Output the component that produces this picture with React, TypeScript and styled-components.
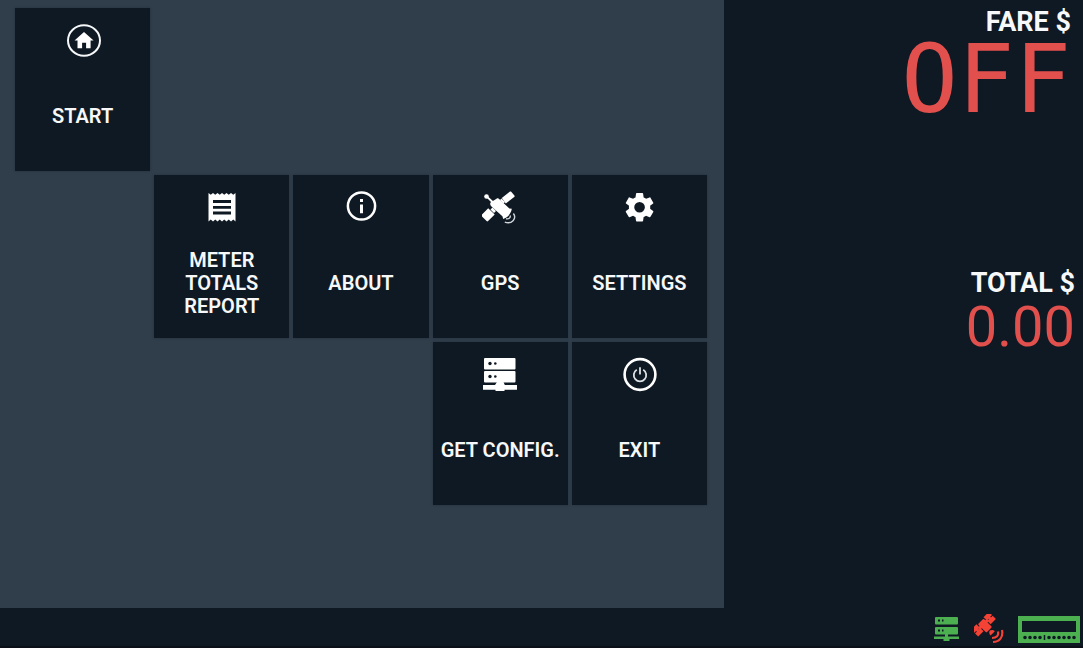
import React from "react";
import styled, { createGlobalStyle } from "styled-components";

const GlobalStyle = createGlobalStyle`
  *, *::before, *::after { box-sizing: border-box; }
  body {
    margin: 0;
    background: #0f1923;
    color: #f6f8f9;
    font-family: Roboto, "Liberation Sans", sans-serif;
  }
`;

const Page = styled.div`
  display: flex;
  flex-direction: column;
  min-height: 100vh;
  background: #0f1923;
`;

const Main = styled.main`
  flex: 1;
  display: grid;
  grid-template-columns: minmax(0, 2fr) minmax(0, 1fr);
`;

const MenuPanel = styled.nav`
  padding: 8px 17px 16px 15px;
  background: #303d4b;
  margin-right: -2px;
`;

const TileGrid = styled.div`
  display: grid;
  grid-template-columns: repeat(5, minmax(0, 1fr));
  grid-auto-rows: minmax(163px, auto);
  gap: 4px;
`;

const Tile = styled.button<{ $column: number; $row: number }>`
  grid-column: ${(p) => p.$column};
  grid-row: ${(p) => p.$row};
  display: flex;
  flex-direction: column;
  align-items: center;
  padding: 14px 0 0;
  border: 0;
  background: #0f1923;
  box-shadow: 0 0 2px #25313d;
  color: inherit;
  font: inherit;
  cursor: pointer;
`;

const TileIcon = styled.svg`
  flex: none;
  width: 36px;
  height: 36px;
`;

const TileLabel = styled.span<{ $narrow?: boolean }>`
  flex: 1;
  display: flex;
  align-items: center;
  max-width: ${(p) => (p.$narrow ? "96px" : "none")};
  padding-top: 4px;
  font-size: 20px;
  font-weight: 600;
  line-height: 23px;
  text-align: center;
`;

const Meter = styled.aside`
  display: grid;
  grid-template-rows: 261px auto;
  align-content: start;
  padding-top: 6px;
`;

const Reading = styled.section<{ $inset: number }>`
  display: flex;
  flex-direction: column;
  align-items: flex-end;
  padding-right: ${(p) => p.$inset}px;
`;

const ReadingLabel = styled.h2`
  margin: 0;
  font-size: 27px;
  font-weight: 700;
  line-height: 32px;
`;

const ReadingValue = styled.output<{ $large?: boolean }>`
  color: #e2504e;
  font-family: ${(p) => (p.$large ? '"DejaVu Sans Mono", monospace' : "Roboto, sans-serif")};
  font-size: ${(p) => (p.$large ? "94px" : "56px")};
  line-height: ${(p) => (p.$large ? "84px" : "56px")};
`;

const StatusBar = styled.footer`
  display: flex;
  justify-content: flex-end;
  align-items: center;
  gap: 14px;
  height: 40px;
  padding: 4px 3px 0 0;
  border-bottom: 2px solid #0a0f18;
`;

const StatusIcon = styled.svg<{ $width: number }>`
  width: ${(p) => p.$width}px;
  height: 30px;
`;

const HomeIcon = () => (
  <TileIcon viewBox="0 0 36 36" aria-hidden="true">
    <ellipse cx="19" cy="18.5" rx="16" ry="15.3" fill="none" stroke="#f5f7f8" strokeWidth="2" />
    <path d="M19 10 9.5 18.500h3v7.700h4.600v-5.500h4v5.500h4.500v-7.700h3z" fill="#fff" />
  </TileIcon>
);

const ReportIcon = () => (
  <TileIcon viewBox="0 0 36 36" aria-hidden="true">
    <path
      d="M4.500 4l2.250 1.800L9 4l2.250 1.800L13.500 4l2.250 1.800L18 4l2.250 1.800L22.500 4l2.250 1.800L27 4l2.250 1.800L31.500 4v28.500l-2.250-2L27 32.500l-2.250-2-2.250 2-2.250-2-2.250 2-2.250-2-2.250 2-2.250-2-2.250 2-2.250-2-2.250 2z"
      fill="#fff"
    />
    <path d="M9 12.500h18M9 18.300h18M9 24h18" stroke="#0f1923" strokeWidth="2.800" />
  </TileIcon>
);

const InfoIcon = () => (
  <TileIcon viewBox="0 0 36 36" aria-hidden="true">
    <circle cx="18.500" cy="17" r="13.600" fill="none" stroke="#fff" strokeWidth="2.500" />
    <path d="M17 10h3v2.900h-3zM17 15.600h3v8.600h-3z" fill="#fff" />
  </TileIcon>
);

const SatelliteIcon = () => (
  <TileIcon viewBox="0 0 36 36" aria-hidden="true">
    <g fill="#fff">
      <circle cx="4.500" cy="7.500" r="2.300" />
      <path d="M5.500 7l6.500 6-1.500 1.500L4.500 8.500z" />
      <path d="M8.500 13.500l6-3.800c1-.6 2-.4 2.900.5l10 9.300 2.400.3c-.8 5-3.900 8.600-8.600 10.200l-.8-2.800-10.900-9.600c-1.400-1.300-1.600-2.600-1-4.100z" />
      <path d="M19.800 9l7.900-6.300c.5-.4 1-.4 1.500.1l3.200 3.800c.4.500.3 1-.2 1.400l-8.400 6.400z" />
      <path d="M6.200 19.200l6.500 6.200-6.600 6.700c-.5.500-1 .5-1.500 0L-.300 27.200c-.5-.5-.5-1 0-1.500z" />
      <path d="M10.500 18.500l3.500 3.500-2 2-3.500-3.500zM19.500 9.500l3.500 3.500-1.500 1.500-3.500-3.500z" />
    </g>
    <path
      d="M28.200 26.500c.5 2.500-1.500 3.800-4.200 3.200M31.400 24.500c3.600 5-1.600 11.200-8.600 8.600"
      fill="none"
      stroke="#cfd5da"
      strokeWidth="1.400"
    />
  </TileIcon>
);

const GearIcon = () => (
  <TileIcon viewBox="0 0 36 36" aria-hidden="true">
    <g transform="translate(.8 .5) scale(1.480)">
      <path
        fill="#fff"
        d="M19.140 12.940c.04-.3.060-.61.060-.94 0-.32-.02-.64-.07-.94l2.030-1.580c.18-.14.230-.41.120-.61l-1.920-3.320c-.12-.22-.37-.29-.59-.22l-2.390.96c-.5-.38-1.030-.7-1.620-.94l-.36-2.540c-.04-.24-.24-.41-.48-.41h-3.840c-.24 0-.43.170-.47.410l-.36 2.540c-.59.240-1.130.570-1.620.940l-2.390-.96c-.22-.08-.47 0-.59.220L2.740 8.870c-.12.210-.08.470.120.610l2.030 1.580c-.05.300-.09.630-.09.940s.02.640.070.940l-2.030 1.580c-.18.140-.23.410-.12.610l1.920 3.320c.12.220.370.290.590.220l2.390-.96c.5.380 1.030.700 1.620.940l.36 2.540c.05.240.240.410.480.410h3.840c.24 0 .44-.17.470-.41l.36-2.540c.59-.24 1.130-.56 1.620-.94l2.390.96c.22.080.470 0 .59-.22l1.920-3.320c.12-.22.070-.47-.12-.61l-2.010-1.580zM12 15.600a3.600 3.600 0 1 1 0-7.200 3.600 3.600 0 0 1 0 7.200z"
      />
    </g>
  </TileIcon>
);

const ServerIcon = () => (
  <TileIcon viewBox="0 0 36 36" aria-hidden="true">
    <g fill="#fff">
      <rect x="2" y="2" width="31.500" height="11.500" rx="1" />
      <rect x="2" y="15" width="31.500" height="11.500" rx="1" />
      <path d="M15 26h6.500l1.300 3H35v4.700H22.500V35h-9v-1.300H1V29h12z" />
    </g>
    <g fill="#0f1923">
      <circle cx="8" cy="7.500" r="1.700" />
      <circle cx="13.300" cy="7.500" r="1.300" />
      <circle cx="8" cy="20.500" r="1.700" />
      <circle cx="13.300" cy="20.500" r="1.300" />
    </g>
  </TileIcon>
);

const PowerIcon = () => (
  <TileIcon viewBox="0 0 36 36" aria-hidden="true">
    <circle cx="19" cy="18.500" r="15.400" fill="none" stroke="#fff" strokeWidth="2.600" />
    <path
      d="M15.800 13.800a6.200 6.200 0 1 0 6.400 0M19 11.300v7.200"
      fill="none"
      stroke="#dce2e6"
      strokeWidth="1.800"
    />
  </TileIcon>
);

const tiles = [
  { label: "START", column: 1, row: 1, Icon: HomeIcon },
  { label: "METER TOTALS REPORT", column: 2, row: 2, Icon: ReportIcon, narrow: true },
  { label: "ABOUT", column: 3, row: 2, Icon: InfoIcon },
  { label: "GPS", column: 4, row: 2, Icon: SatelliteIcon },
  { label: "SETTINGS", column: 5, row: 2, Icon: GearIcon },
  { label: "GET CONFIG.", column: 4, row: 3, Icon: ServerIcon },
  { label: "EXIT", column: 5, row: 3, Icon: PowerIcon },
];

export default function App() {
  return (
    <Page>
      <GlobalStyle />
      <Main>
        <MenuPanel aria-label="Main menu">
          <TileGrid>
            {tiles.map(({ label, column, row, Icon, narrow }) => (
              <Tile key={label} type="button" $column={column} $row={row}>
                <Icon />
                <TileLabel $narrow={narrow}>{label}</TileLabel>
              </Tile>
            ))}
          </TileGrid>
        </MenuPanel>
        <Meter>
          <Reading $inset={12}>
            <ReadingLabel>FARE $</ReadingLabel>
            <ReadingValue $large>OFF</ReadingValue>
          </Reading>
          <Reading $inset={8}>
            <ReadingLabel>TOTAL $</ReadingLabel>
            <ReadingValue>0.00</ReadingValue>
          </Reading>
        </Meter>
      </Main>
      <StatusBar>
        <StatusIcon $width={26} viewBox="0 0 26 30" role="img" aria-label="Server connected">
          <g fill="#4caf50">
            <rect x="1" y="3" width="23" height="7.500" rx="1" />
            <rect x="1" y="13" width="23" height="7.500" rx="1" />
            <path d="M11 20h3v2.500h11v2.500H15.500v2h-6v-2H0v-2.500h11z" />
          </g>
          <path d="M4 6.500h2M8 6.500h1.500M4 16.500h2M8 16.500h1.500" stroke="#0f1923" strokeWidth="2" />
        </StatusIcon>
        <StatusIcon $width={30} viewBox="0 0 30 30" role="img" aria-label="No satellite signal">
          <g fill="#f44336">
            <g transform="rotate(45 12 12)">
              <rect x="5" y="8.500" width="12" height="8" rx="1" />
              <rect x="4" y="0" width="4.500" height="7.500" />
              <rect x="9.500" y="0" width="4.500" height="7.500" />
              <rect x="4" y="17.500" width="4.500" height="7.500" />
              <rect x="9.500" y="17.500" width="4.500" height="7.500" />
              <rect x="5" y="2.500" width="8" height="3" />
              <rect x="5" y="19.500" width="8" height="3" />
              <rect x="7.500" y="6" width="3" height="13" />
              <path d="M18 12.500a4 4 0 0 1 4-3v6a4 4 0 0 1-4-3z" />
            </g>
          </g>
          <path
            d="M24 17.500c1 4-1.500 6.500-6 6.500M28 16c1.500 7-2.500 12-9 12"
            fill="none"
            stroke="#f44336"
            strokeWidth="2.200"
          />
        </StatusIcon>
        <StatusIcon $width={62} viewBox="0 0 62 30" role="img" aria-label="Meter connected">
          <path fill="#4caf50" fillRule="evenodd" d="M0 2h62v27H0zM4 7v11h54V7z" />
          <path
            d="M7 23.500h.01M12 23.500h.01M17 23.500h.01M22 23.500h.01M31 23.500h.01M36 23.500h.01M41 23.500h.01M46 23.500h.01M51 23.500h.01M56 23.500h.01"
            stroke="#0f1923"
            strokeWidth="3.600"
            strokeLinecap="round"
          />
          <path d="M26.500 21v5" stroke="#0f1923" strokeWidth="1.500" />
        </StatusIcon>
      </StatusBar>
    </Page>
  );
}
